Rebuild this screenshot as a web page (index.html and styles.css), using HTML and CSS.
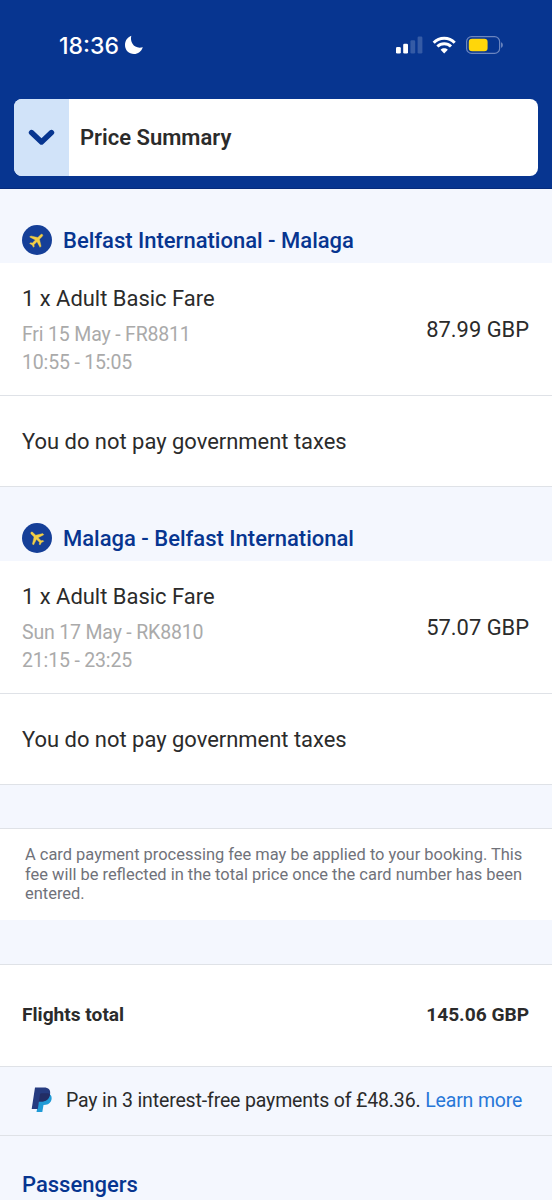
FILE: index.html
```html
<!DOCTYPE html>
<html lang="en">
<head>
<meta charset="utf-8">
<title>Price Summary</title>
<link rel="stylesheet" href="styles.css">
</head>
<body>
<header class="top">
  <div class="status">
    <span class="time">18:36</span>
    <svg class="moon" width="20" height="20" viewBox="0 0 20 20"><path d="M7.300.8C5.600 7.500 10.500 14.500 18.800 12.200C17.300 16.500 14 19 10 19C4.800 19 1 15.200 1 10C1 5.800 3.500 2.300 7.300.8Z" fill="#fff"/></svg>
    <svg class="signals" width="110" height="20" viewBox="0 0 110 20">
      <rect x="1" y="12" width="4.800" height="6.500" rx="1.300" fill="#fff"/>
      <rect x="8.200" y="8.800" width="4.800" height="9.700" rx="1.300" fill="#fff"/>
      <rect x="15.400" y="5.300" width="4.800" height="13.200" rx="1.300" fill="#355ba5"/>
      <rect x="22.600" y="1.500" width="4.800" height="17" rx="1.300" fill="#355ba5"/>
      <g fill="none" stroke="#fff" stroke-width="3">
        <path d="M38.700 7.700C44.500 1.700 53.900 1.700 59.700 7.700"/>
        <path d="M42.400 11.500C46.200 7.700 52.200 7.700 56 11.500"/>
      </g>
      <path d="M45.600 14.700C47.700 12.800 50.700 12.800 52.800 14.700L49.200 18.500Z" fill="#fff"/>
      <rect x="71.600" y="1.600" width="33" height="16.800" rx="5" fill="none" stroke="#6b85bf" stroke-width="1.200"/>
      <rect x="73.800" y="3.800" width="18.800" height="12.400" rx="3.300" fill="#ffd60a"/>
      <path d="M106.200 7.200C108.200 8 108.200 12 106.200 12.800Z" fill="#7d94c7"/>
    </svg>
  </div>
  <div class="summary">
    <div class="toggle"><svg width="28" height="20" viewBox="0 0 28 20"><path d="M3.500 4.500L13.500 14L23.500 4.500" fill="none" stroke="#073590" stroke-width="5.400" stroke-linecap="round" stroke-linejoin="round"/></svg></div>
    <div class="title">Price Summary</div>
  </div>
</header>
<main>
  <h2 class="route">
    <svg class="plane" width="30" height="30" viewBox="0 0 30 30"><circle cx="15" cy="15" r="15" fill="#153f98"/><path transform="translate(15 15) rotate(45) scale(.77) translate(-11.500 -12)" d="M21 16v-2l-8-5V3.500c0-.83-.67-1.500-1.500-1.500S10 2.670 10 3.500V9l-8 5v2l8-2.500V19l-2 1.500V22l3.500-1 3.500 1v-1.500L13 19v-5.500l8 2.500z" fill="#f3cf45" stroke="#f3cf45" stroke-width=".5"/></svg>
    <span>Belfast International - Malaga</span>
  </h2>
  <section class="fare">
    <div><div class="name">1 x Adult Basic Fare</div><div class="detail">Fri 15 May - FR8811</div><div class="detail">10:55 - 15:05</div></div>
    <div class="price">87.99 GBP</div>
  </section>
  <div class="tax">You do not pay government taxes</div>
  <h2 class="route">
    <svg class="plane" width="30" height="30" viewBox="0 0 30 30"><circle cx="15" cy="15" r="15" fill="#153f98"/><path transform="translate(14.500 14.700) rotate(-45) scale(.77) translate(-11.500 -12)" d="M21 16v-2l-8-5V3.500c0-.83-.67-1.500-1.500-1.500S10 2.670 10 3.500V9l-8 5v2l8-2.500V19l-2 1.500V22l3.500-1 3.500 1v-1.500L13 19v-5.500l8 2.500z" fill="#f3cf45" stroke="#f3cf45" stroke-width=".5"/></svg>
    <span>Malaga - Belfast International</span>
  </h2>
  <section class="fare">
    <div><div class="name">1 x Adult Basic Fare</div><div class="detail">Sun 17 May - RK8810</div><div class="detail">21:15 - 23:25</div></div>
    <div class="price">57.07 GBP</div>
  </section>
  <div class="tax">You do not pay government taxes</div>
  <div class="gap"></div>
  <p class="note">A card payment processing fee may be applied to your booking. This<br>fee will be reflected in the total price once the card number has been<br>entered.</p>
  <div class="gap gap-total"></div>
  <div class="total"><span>Flights total</span><span>145.06 GBP</span></div>
  <div class="paypal">
    <svg width="22" height="26" viewBox="0 0 22 26">
      <path d="M9 7H18.500C21 8.500 21.200 12 19.800 14.500C18.500 17 16 18 12.500 18L11.300 25H5.500Z" fill="#1f9ad6"/>
      <path d="M4 .5H13C17.500.5 20 3 19 7.500C18 12.500 14.500 14.500 10 14.500H8L6.800 22H.7Z" fill="#253b80"/>
      <path d="M9 7.200C9.200 6.500 9.700 6.200 10.500 6.200H16.500C17.500 6.300 18.400 6.600 19 7.200C18 12.500 14.500 14.500 10 14.500H7.900Z" fill="#222d65"/>
    </svg>
    <span class="pay">Pay in 3 interest-free payments of £48.36. <a>Learn more</a></span>
  </div>
  <h2 class="passengers">Passengers</h2>
</main>
</body>
</html>
```
FILE: styles.css
```css
* { box-sizing: border-box; }
body { margin: 0; width: 552px; height: 1200px; overflow: hidden; background: #f4f7fe; color: #2b2b2b; font-family: Roboto, sans-serif; }
svg { display: block; flex: none; }
.top { height: 189px; background: #073590; padding: 35px 14px 0; border-bottom: 1px solid #062b7c; }
.status { height: 64px; display: flex; align-items: flex-start; padding-left: 45px; }
.time { width: 64px; font: 500 23px/22px Inter, sans-serif; color: #fff; white-space: nowrap; }
.moon { margin-left: 1px; }
.signals { margin-left: 251px; }
.summary { display: flex; height: 77px; background: #fff; border-radius: 8px; overflow: hidden; }
.toggle { width: 55px; background: #d1e3f9; display: flex; align-items: center; justify-content: center; }
.title { padding-left: 11px; font-size: 22px; font-weight: 600; line-height: 77px; }
.route { margin: 0; height: 74px; padding: 28px 22px 0; display: flex; align-items: center; gap: 11px; font-size: 22px; font-weight: 500; color: #073590; }
.fare { height: 133px; padding: 22px 23px 0 22px; background: #fff; border-bottom: 1px solid #dfe2e7; display: flex; justify-content: space-between; }
.name { font-size: 21.950px; line-height: 28px; margin-bottom: 8px; }
.detail { font-size: 19.500px; line-height: 28px; letter-spacing: -.17px; color: #aaa; }
.price { font-size: 21.900px; line-height: 28px; padding-top: 31px; }
.tax { height: 91px; background: #fff; border-bottom: 1px solid #dfe2e7; padding-left: 22px; font-size: 21.950px; line-height: 91px; }
.gap { height: 43px; }
.gap-total { height: 44px; }
.note { margin: 0; height: 92px; padding: 16px 25px; background: #fff; border-top: 1px solid #dfe2e7; font-size: 16.440px; line-height: 19.500px; color: #70727a; white-space: nowrap; }
.total { height: 103px; padding: 0 23px 2px 22px; background: #fff; border: solid #dfe2e7; border-width: 1px 0; display: flex; align-items: center; justify-content: space-between; font-size: 19.150px; font-weight: 700; }
.paypal { height: 69px; padding: 0 0 2px 31px; border-bottom: 1px solid #dfe2e7; display: flex; align-items: center; gap: 13px; font-size: 19.500px; letter-spacing: -.15px; white-space: nowrap; }
.paypal a { color: #2877d8; }
.passengers { margin: 0; padding: 35px 22px; font-size: 22px; font-weight: 500; line-height: 28px; color: #073590; }
```
